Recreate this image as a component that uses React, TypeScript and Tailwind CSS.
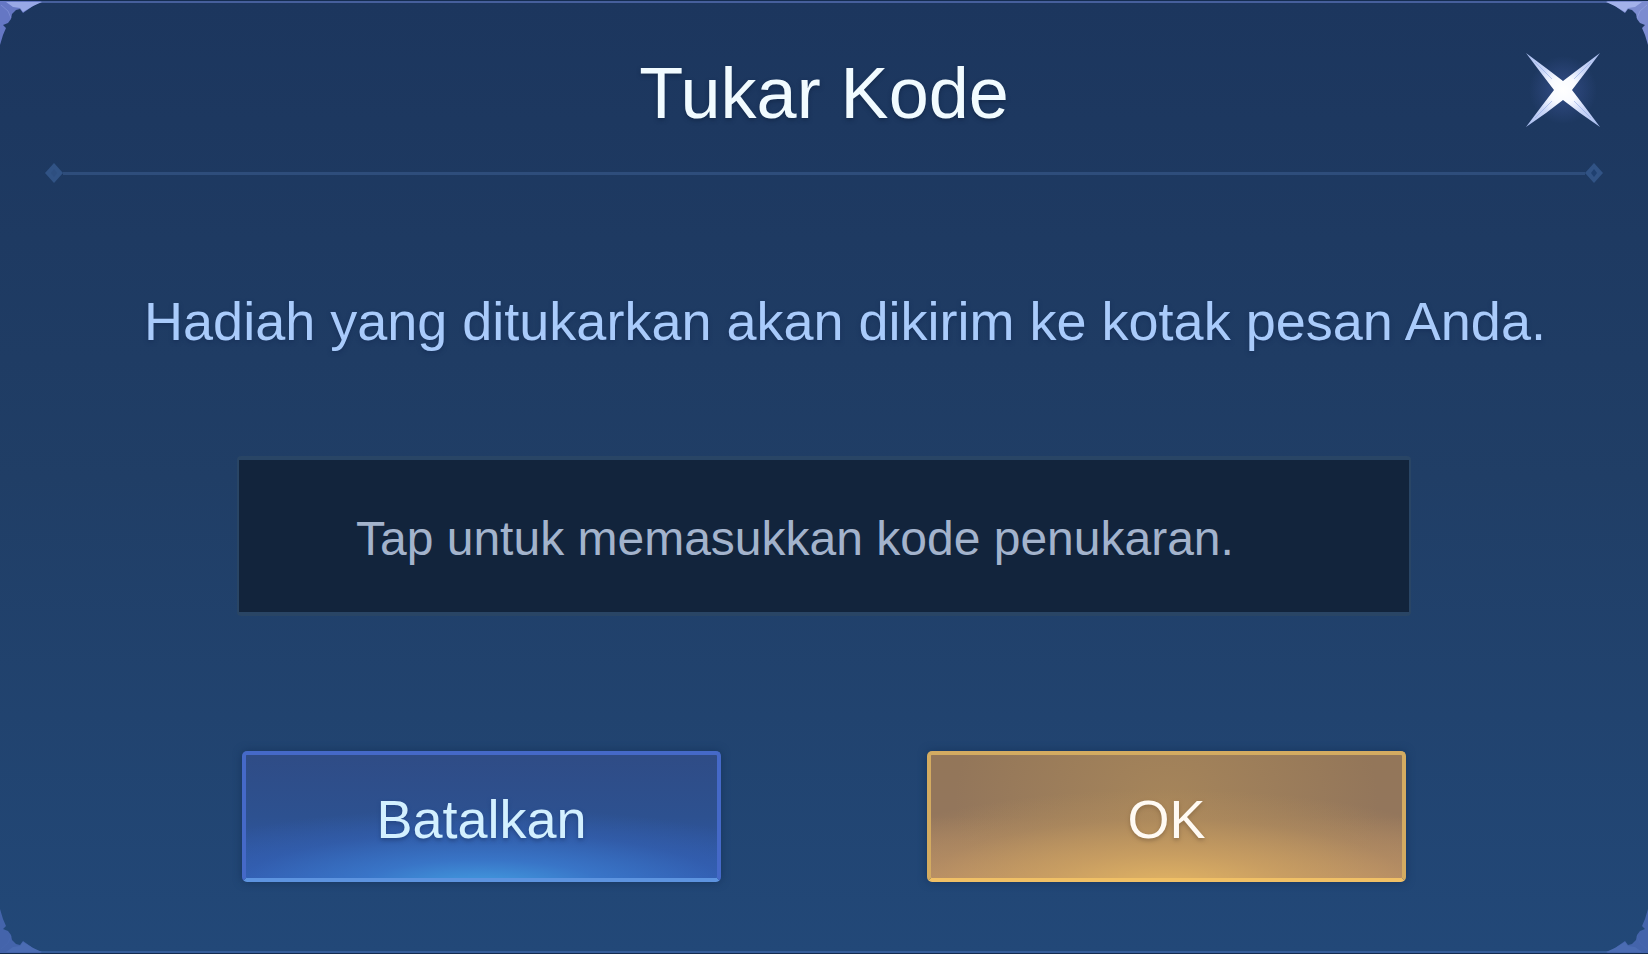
import { useState } from "react"

function Corner({ className, base, light }: { className: string; base: string; light: string }) {
    return (
        <svg className={className} width="44" height="46" viewBox="0 0 44 46" aria-hidden="true">
            <path d="M0 0H42L33 5L23 12L20 8L16 9L12 13L11 18L8 22L3 24L6 27L3 34L0 44Z" fill={base} />
            <path d="M6 1H42L33 5L23 11L20 7L13 6Z" fill={light} />
            <path d="M1 4L8 10L11 17" fill="none" stroke={light} strokeOpacity="0.4" />
        </svg>
    )
}

function Diamond({ hole }: { hole: string }) {
    return (
        <svg className="shrink-0" width="18" height="20" viewBox="0 0 18 20" aria-hidden="true">
            <path d="M9 0L18 10L9 20L0 10Z" fill="#315385" />
            <path d="M9 6L12 10L9 14L6 10Z" fill={hole} />
        </svg>
    )
}

function CloseIcon() {
    return (
        <svg width="76" height="76" viewBox="0 0 76 76" aria-hidden="true">
            <defs>
                <radialGradient id="star" gradientUnits="userSpaceOnUse" cx="38" cy="38" r="50">
                    <stop offset="0" stopColor="#ffffff" />
                    <stop offset="0.28" stopColor="#f8faff" />
                    <stop offset="0.55" stopColor="#ccd8f8" />
                    <stop offset="1" stopColor="#a9bdf0" />
                </radialGradient>
                <radialGradient id="halo">
                    <stop offset="0" stopColor="#4a62b0" stopOpacity="0.5" />
                    <stop offset="1" stopColor="#4a62b0" stopOpacity="0" />
                </radialGradient>
            </defs>
            <circle cx="38" cy="38" r="34" fill="url(#halo)" />
            <path
                d="M1 1L21 16L38 29L55 16L75 1L60 21L47 38L60 55L75 75L55 61L38 48L21 61L1 75L16 55L29 38L16 21Z"
                fill="url(#star)"
            />
            <path
                d="M10 10L27 27M66 10L49 27M10 66L27 49M66 66L49 49"
                stroke="#93aae6"
                strokeOpacity="0.6"
            />
        </svg>
    )
}

export default function App() {
    const [code, setCode] = useState("")

    return (
        <main className="relative min-h-screen overflow-hidden bg-linear-to-b from-[#1c365e] via-[#203e66] to-[#224878] font-['Liberation_Sans',Arial,sans-serif] border-y border-[#142c50]">
            <div className="absolute inset-0 border-y-2 border-t-[#465f9c] border-b-[#355c98] pointer-events-none" />
            <Corner className="absolute top-0 left-0" base="#6577c4" light="#98a8e6" />
            <Corner className="absolute top-0 right-0 -scale-x-100" base="#7c8cd0" light="#a3b2ea" />
            <Corner className="absolute bottom-0 left-0 -scale-y-100" base="#4464ab" light="#4b6cb3" />
            <Corner className="absolute bottom-0 right-0 -scale-100" base="#4464ab" light="#4b6cb3" />

            <header className="grid grid-cols-[1fr_auto_1fr] px-[47px] pt-[51px]">
                <h1 className="col-start-2 text-[72px] leading-[82px] text-[#f1fbff] [text-shadow:0_2px_4px_#142a4c]">
                    Tukar Kode
                </h1>
                <button type="button" aria-label="Tutup" className="h-[76px] justify-self-end cursor-pointer">
                    <CloseIcon />
                </button>
            </header>

            <div className="mt-[29px] flex items-center px-[45px]">
                <Diamond hole="#2e4f80" />
                <div className="h-[3px] flex-1 bg-[#2e4d7b]" />
                <Diamond hole="#1f4070" />
            </div>

            <form onSubmit={(e) => e.preventDefault()}>
                <label
                    htmlFor="code"
                    className="mt-[108px] block pl-[42px] text-center text-[54px] leading-[60px] text-[#a9cbfb] [text-shadow:0_2px_4px_#18315a]"
                >
                    Hadiah yang ditukarkan akan dikirim ke kotak pesan Anda.
                </label>
                <div className="px-[237px]">
                    <input
                        id="code"
                        type="text"
                        value={code}
                        onChange={(e) => setCode(e.target.value)}
                        placeholder="Tap untuk memasukkan kode penukaran."
                        className="mt-[105px] block h-[160px] w-full rounded-sm border-x-2 border-y-4 border-[#294565] bg-[#12243c] px-[117px] pt-1 text-[48px] text-[#a3b3cc] outline-none placeholder:text-[#a3b3cc]"
                    />
                    <div className="mt-[135px] grid grid-cols-2 gap-[206px] px-[5px] pb-16 text-[54px]">
                        <button
                            type="button"
                            className="h-[131px] cursor-pointer rounded-[5px] border-4 border-[#4569c8] border-b-[#5d94e0] bg-[radial-gradient(ellipse_75%_65%_at_50%_108%,#43a0e2,#3b7ccfcc_35%,#3567bc66_70%,transparent),linear-gradient(#2f4c86,#2d5190_50%,#3159ac)] pt-1.5 text-[#d3f0ff] shadow-[0_0_8px_#16355e] [text-shadow:0_2px_4px_#234583]"
                        >
                            Batalkan
                        </button>
                        <button
                            type="submit"
                            className="h-[131px] cursor-pointer rounded-[5px] border-4 border-[#d3ab61] border-b-[#f0c066] bg-[radial-gradient(ellipse_75%_80%_at_50%_108%,#e3b564,#cfa362cc_35%,#b9925f66_70%,transparent),radial-gradient(ellipse_45%_140%_at_50%_40%,#a6855a,transparent),linear-gradient(#937659,#93765c_50%,#b58b68)] pt-1.5 text-[#fffaf3] shadow-[0_0_8px_#16355e] [text-shadow:0_2px_4px_#8f6f48]"
                        >
                            OK
                        </button>
                    </div>
                </div>
            </form>
        </main>
    )
}
